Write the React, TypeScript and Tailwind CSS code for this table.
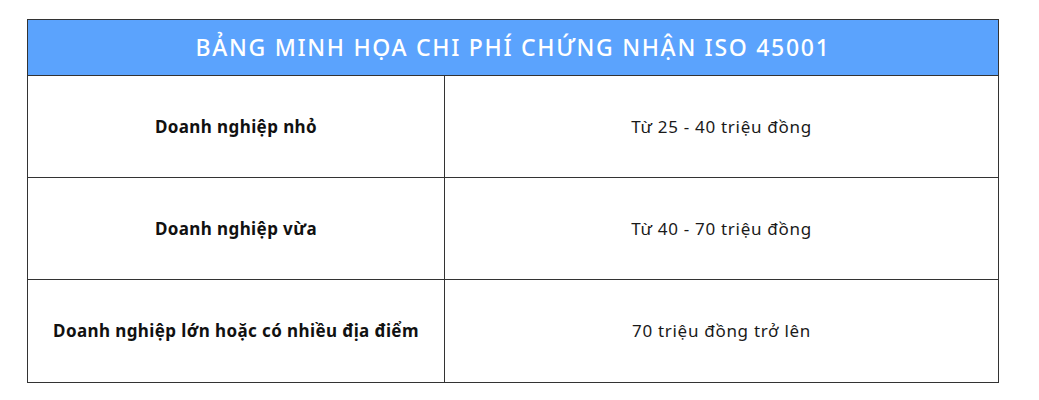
const rows = [
  { loai: 'Doanh nghiệp nhỏ', chiPhi: 'Từ 25 - 40 triệu đồng' },
  { loai: 'Doanh nghiệp vừa', chiPhi: 'Từ 40 - 70 triệu đồng' },
  { loai: 'Doanh nghiệp lớn hoặc có nhiều địa điểm', chiPhi: '70 triệu đồng trở lên' },
];

export default function App() {
  return (
    <div
      className="w-[1039px] h-[400px] bg-white pt-[19px] pl-[27px]"
      style={{ fontFamily: '"Noto Sans", "Open Sans", sans-serif' }}
    >
      <div className="w-[972px] border border-[#333]">
        {/* Header */}
        <div className="h-[56px] bg-[#5ba3fd] flex items-center justify-center border-b border-[#333]">
          <span className="text-white text-[23px] font-medium tracking-[1.7px]">
            BẢNG MINH HỌA CHI PHÍ CHỨNG NHẬN ISO 45001
          </span>
        </div>
        {rows.map((r, i) => (
          <div
            key={r.loai}
            className={`grid grid-cols-[417px_1fr] h-[102px] ${i < rows.length - 1 ? 'border-b border-[#333]' : ''}`}
          >
            <div className="flex items-center justify-center border-r border-[#333] text-[17px] font-bold tracking-[0.4px] text-[#111]">
              {r.loai}
            </div>
            <div className="flex items-center justify-center text-[17px] tracking-[0.7px] text-[#1a1a1a]">
              {r.chiPhi}
            </div>
          </div>
        ))}
      </div>
    </div>
  );
}
